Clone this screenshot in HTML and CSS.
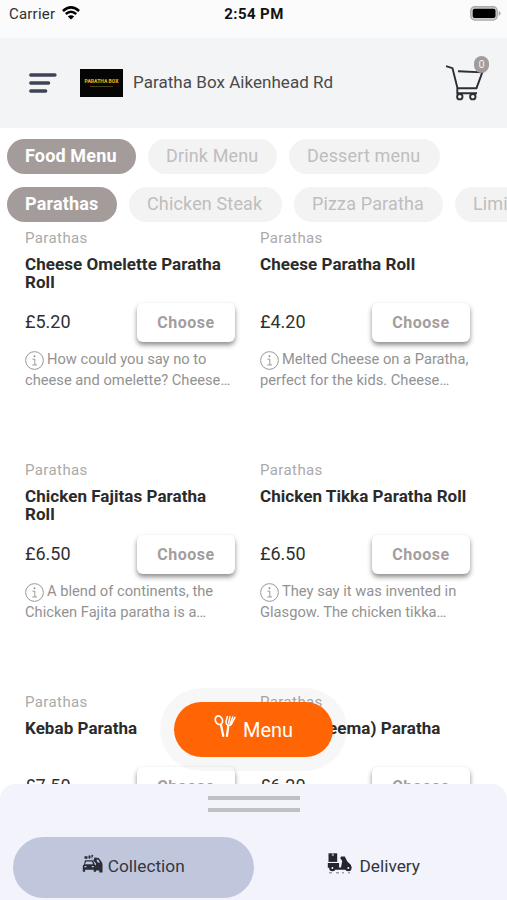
FILE: index.html
```html
<!DOCTYPE html>
<html lang="en">
<head>
<meta charset="utf-8">
<title>Paratha Box</title>
<link rel="stylesheet" href="styles.css">
</head>
<body>
<svg class="defs" width="0" height="0">
  <symbol id="info" viewBox="0 0 18 18"><circle cx="9" cy="9" r="8.4" fill="none" stroke="currentColor" stroke-width=".9"/><circle cx="9" cy="5" r=".9" fill="currentColor"/><path d="M7 7.7h2.3v5.4M7 13.2h4.4" fill="none" stroke="currentColor" stroke-width=".9"/></symbol>
</svg>
<div class="app">
  <div class="status">
    <div class="carrier"><span>Carrier</span>
      <svg width="18" height="14" viewBox="0 0 18 14" fill="none" stroke="#000" stroke-width="2.5"><path d="M.9 5Q9-2.3 17.1 5M3.8 8Q9 3.4 14.2 8"/><path d="M9 13.6 5.8 10.4Q9 8 12.2 10.4Z" fill="#000" stroke="none"/></svg>
    </div>
    <div class="time">2:54 PM</div>
    <svg class="battery" width="31" height="15" viewBox="0 0 31 15"><rect x=".75" y=".75" width="26.5" height="13.3" rx="4" fill="#ccc" stroke="#aaa" stroke-width="1.3"/><rect x="2.7" y="2.8" width="22.8" height="9.2" rx="2" fill="#000"/><path d="M28.6 5q2 .5 2 2.4t-2 2.4z" fill="#aaa"/></svg>
  </div>
  <header class="header">
    <svg class="burger" width="28" height="20" viewBox="0 0 28 20" stroke="#3f4155" stroke-width="3.3" stroke-linecap="round"><path d="M1.8 2H26M1.8 10H19.6M1.8 18H16.7"/></svg>
    <div class="logo"><b>PARATHA BOX</b><i></i></div>
    <h1>Paratha Box Aikenhead Rd</h1>
    <div class="cart">
      <svg width="40" height="38" viewBox="0 0 40 38" fill="none" stroke="#2c2e36" stroke-width="1.9"><path d="M1 2.2 7.5 4.2 12.5 24.2H31.5L37.3 8.3 13 7.3M12.3 24v5.2H32"/><circle cx="14.8" cy="32.7" r="2.7"/><circle cx="27.8" cy="32.7" r="2.7"/></svg>
      <span class="badge">0</span>
    </div>
  </header>
  <nav class="tabs">
    <a class="tab on food">Food Menu</a><a class="tab drink">Drink Menu</a><a class="tab dessert">Dessert menu</a>
  </nav>
  <nav class="tabs">
    <a class="tab on para">Parathas</a><a class="tab steak">Chicken Steak</a><a class="tab pizza">Pizza Paratha</a><a class="tab limited">Limited</a>
  </nav>
  <main class="products">
    <article class="card"><div class="cat">Parathas</div><h2>Cheese Omelette Paratha<br>Roll</h2><div class="buy"><span>£5.20</span><button>Choose</button></div><p><svg class="info"><use href="#info"/></svg>How could you say no to<br>cheese and omelette? Cheese…</p></article>
    <article class="card"><div class="cat">Parathas</div><h2>Cheese Paratha Roll</h2><div class="buy"><span>£4.20</span><button>Choose</button></div><p><svg class="info"><use href="#info"/></svg>Melted Cheese on a Paratha,<br>perfect for the kids. Cheese…</p></article>
    <article class="card"><div class="cat">Parathas</div><h2>Chicken Fajitas Paratha<br>Roll</h2><div class="buy"><span>£6.50</span><button>Choose</button></div><p><svg class="info"><use href="#info"/></svg>A blend of continents, the<br>Chicken Fajita paratha is a…</p></article>
    <article class="card"><div class="cat">Parathas</div><h2>Chicken Tikka Paratha Roll</h2><div class="buy"><span>£6.50</span><button>Choose</button></div><p><svg class="info"><use href="#info"/></svg>They say it was invented in<br>Glasgow. The chicken tikka…</p></article>
    <article class="card"><div class="cat">Parathas</div><h2>Kebab Paratha</h2><div class="buy"><span>£7.50</span><button>Choose</button></div></article>
    <article class="card"><div class="cat">Parathas</div><h2>Mince (Keema) Paratha</h2><div class="buy"><span>£6.20</span><button>Choose</button></div></article>
  </main>
  <div class="halo"><button class="menu">
    <svg width="22" height="23" viewBox="0 0 22 23" fill="none" stroke="#fff" stroke-width="1.7" stroke-linecap="round"><ellipse cx="4.9" cy="5.2" rx="3.5" ry="4.4" transform="rotate(-22 4.9 5.2)"/><path d="M6.9 9.5 9.3 21" stroke-width="2.2"/><path d="M14.4 10.5 12.9 21" stroke-width="2.2"/><path d="M13.4 1.5 12 6.5Q12 10 14.7 10.3 17.5 10.4 18.4 7.2L21 2.3M16 1.7 14.6 8M18.7 1.9 16.4 8.5" stroke-width="1.5"/></svg>
    <span>Menu</span></button></div>
  <footer class="sheet">
    <div class="grip"></div>
    <div class="modes">
      <div class="mode on">
        <svg width="21" height="19" viewBox="0 0 21 19" fill="#2a2c38"><path d="M2.5 2.2h3v2.5h-3zM6.5 1.5h2v3h-2zM9.5.5l2 1-2 3.3zM12.5 3.5l4.2.6 3 4 .8 2v8.3h-3.2v-2H14v-7l-2.7-3z"/><path d="M3 6.2h8l1.8 4.2 1.2 1.2v6.2h-2.3v-2H3.1v2H.8v-6.2L2 10.4z"/><path d="M4 7.5h6l1 2.8H3zM2.5 12h2v1.3h-2zM9.8 12h2v1.3h-2zM14.5 5.5l1.8.2 1.8 3-2.8-.5z" fill="#c0c7dd"/></svg>
        <span>Collection</span>
      </div>
      <div class="mode">
        <svg class="scooter" width="25" height="21" viewBox="0 0 25 21" fill="#24252d"><path d="M1.5.3h8.7v8.6H1.5z"/><path d="M4.8.3h2.1v2.6H4.8z" fill="#9a9ba5"/><path d="M.8 10h11.3v4.6H14l1.2-6.5-2-3 1-1.6h3.6l2.5 5 3.5 3.3.7 3h-4.2l-1.3 2H8.2l-.8-2H.8z"/><circle cx="5.4" cy="15" r="3.2"/><circle cx="21.3" cy="15" r="3.2"/><circle cx="5.4" cy="15" r="1" fill="#f2f3fb"/><circle cx="21.3" cy="15" r="1" fill="#f2f3fb"/><path d="M2 19.8h3m4 0h3m3 0h2m4 0h2" stroke="#777985" stroke-width="1"/></svg>
        <span>Delivery</span>
      </div>
    </div>
  </footer>
</div>
</body>
</html>
```
FILE: styles.css
```css
* { box-sizing: border-box; }
body { margin: 0; background: #fff; font-family: Roboto, "Liberation Sans", sans-serif; color: #303030; }
button { font-family: inherit; border: 0; padding: 0; }
.defs { display: none; }
.app { position: relative; width: 507px; height: 900px; overflow: hidden; background: #fff; }
.status { display: grid; grid-template-columns: 1fr auto 1fr; height: 38px; padding: 5px 6px 0 9px; background: #fbfbfb; align-items: start; }
.carrier { display: flex; gap: 7px; font-size: 15px; line-height: 18px; color: #303030; letter-spacing: .2px; }
.carrier svg { margin-top: 1px; }
.time { font-size: 15px; line-height: 18px; font-weight: 700; color: #111; letter-spacing: .4px; margin-right: 2px; }
.battery { justify-self: end; margin-top: 1px; }
.header { display: flex; align-items: center; height: 90px; padding: 0 18px 0 29px; background: #f2f4f6; }
.burger { margin-right: 23px; }
.logo { width: 43px; height: 28px; background: #050505; display: flex; flex-direction: column; align-items: center; justify-content: center; gap: 2px; }
.logo b { font-size: 5px; line-height: 5px; color: #e8a80c; font-weight: 900; white-space: nowrap; }
.logo i { width: 23px; height: 1px; background: #4b3d1c; }
h1 { margin: 0 0 3px 10px; font-size: 17px; font-weight: 400; color: #4a4a4a; white-space: nowrap; letter-spacing: .04px; }
.cart { position: relative; margin: -2px 0 0 auto; width: 44px; height: 52px; padding-top: 8px; }
.badge { position: absolute; top: 0; right: 0; width: 15px; height: 17px; border-radius: 8px; background: #a39c9c; color: #eee; font-size: 11px; line-height: 17px; text-align: center; }
.tabs { display: flex; gap: 12px; height: 36px; margin: 11px 0 0 7px; }
.tabs + .tabs { margin-top: 12px; }
.tab { flex: none; height: 35px; border-radius: 18px; background: #f3f3f3; color: #bebebe; font-size: 18px; line-height: 34px; padding-left: 18px; white-space: nowrap; letter-spacing: .15px; }
.tab.on { background: #a39c9b; color: #fff; font-weight: 700; }
.food { width: 129px; }
.drink { width: 129px; }
.dessert { width: 151px; }
.para { width: 110px; }
.steak { width: 153px; }
.pizza { width: 149px; }
.limited { width: 100px; }
.products { display: grid; grid-template-columns: 211px 211px; column-gap: 24px; grid-auto-rows: 232px; padding: 5px 0 0 25px; }
.card { min-width: 0; white-space: nowrap; }
.cat { font-size: 15px; line-height: 20px; color: #aaa; letter-spacing: .4px; }
h2 { margin: 7px 0 0; height: 48px; font-size: 17px; line-height: 18px; font-weight: 700; color: #2b2b2b; letter-spacing: .05px; }
.buy { display: flex; justify-content: space-between; align-items: center; height: 39px; padding-right: 1px; font-size: 18px; }
.buy button { width: 98px; height: 39px; border-radius: 6px; background: #fff; color: #a39e9d; font-size: 16px; font-weight: 700; letter-spacing: .5px; box-shadow: 0 3px 5px rgba(0,0,0,.45); }
.buy span { margin-top: -2px; }
.card p { margin: 7px 0 0; font-size: 14.7px; line-height: 21px; color: #929292; }
.info { width: 19px; height: 19px; vertical-align: -4px; margin: -2px 3px -2px 0; }
.halo { position: absolute; left: 160px; top: 688px; width: 187px; height: 83px; border-radius: 42px; padding: 14px; background: rgba(0,0,0,.03); }
.menu { display: flex; align-items: center; justify-content: center; gap: 7px; width: 159px; height: 55px; border-radius: 28px; background: #ff6505; color: #fff; font-size: 20px; }
.menu svg { margin-top: -6px; }
.sheet { position: absolute; left: 0; right: 0; bottom: 0; height: 116px; border-radius: 15px 15px 0 0; background: #f2f3fb; padding: 12px 13px 0; }
.grip { width: 92px; height: 16px; margin: 0 auto; border: solid #bfc0c6; border-width: 4px 0; }
.modes { display: flex; margin-top: 25px; }
.mode { display: flex; width: 241px; height: 61px; border-radius: 31px; align-items: center; justify-content: center; gap: 5px; font-size: 17.3px; color: #34363e; }
.mode span { margin-top: -4px; }
.mode svg { margin-top: -8px; }
.mode .scooter { margin-right: 2px; }
.mode.on { background: #c0c7dd; }
```
